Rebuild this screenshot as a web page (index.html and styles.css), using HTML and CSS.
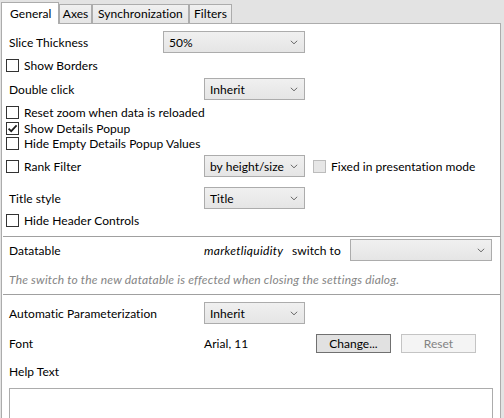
FILE: index.html
```html
<!DOCTYPE html>
<html>
<head>
<meta charset="utf-8">
<link rel="stylesheet" href="styles.css">
</head>
<body>
<div class="tabs">
  <div class="tab tab-general selected">General</div>
  <div class="tab tab-axes">Axes</div>
  <div class="tab tab-sync">Synchronization</div>
  <div class="tab tab-filters">Filters</div>
</div>
<div class="panel">
  <div class="row r-slice">
    <span class="label label-slice">Slice Thickness</span>
    <div class="combo combo-wide"><span>50%</span><svg class="arrow" width="8" height="5" viewBox="0 0 8 5"><path d="M0.8 0.8 L4 3.8 L7.2 0.8" fill="none" stroke="#6a6a6a" stroke-width="1"/></svg></div>
  </div>
  <div class="row crow r-borders">
    <span class="check"></span><span>Show Borders</span>
  </div>
  <div class="row r-dbl">
    <span class="label">Double click</span>
    <div class="combo"><span>Inherit</span><svg class="arrow" width="8" height="5" viewBox="0 0 8 5"><path d="M0.8 0.8 L4 3.8 L7.2 0.8" fill="none" stroke="#6a6a6a" stroke-width="1"/></svg></div>
  </div>
  <div class="row crow small r-reset">
    <span class="check"></span><span>Reset zoom when data is reloaded</span>
  </div>
  <div class="row crow small r-details">
    <span class="check"><svg width="11" height="11" viewBox="0 0 11 11"><path d="M1.6 5.6 L4.2 8.2 L9.6 2.4" fill="none" stroke="#1c1c1c" stroke-width="1.7"/></svg></span><span>Show Details Popup</span>
  </div>
  <div class="row crow small r-empty">
    <span class="check"></span><span>Hide Empty Details Popup Values</span>
  </div>
  <div class="row crow r-rank">
    <span class="check-label"><span class="check"></span><span>Rank Filter</span></span>
    <div class="combo"><span>by height/size</span><svg class="arrow" width="8" height="5" viewBox="0 0 8 5"><path d="M0.8 0.8 L4 3.8 L7.2 0.8" fill="none" stroke="#6a6a6a" stroke-width="1"/></svg></div>
    <span class="check disabled fixed-check"></span><span>Fixed in presentation mode</span>
  </div>
  <div class="row r-title">
    <span class="label">Title style</span>
    <div class="combo"><span>Title</span><svg class="arrow" width="8" height="5" viewBox="0 0 8 5"><path d="M0.8 0.8 L4 3.8 L7.2 0.8" fill="none" stroke="#6a6a6a" stroke-width="1"/></svg></div>
  </div>
  <div class="row crow small r-header">
    <span class="check"></span><span>Hide Header Controls</span>
  </div>
  <div class="separator sep-1"></div>
  <div class="row r-datatable">
    <span class="label">Datatable</span>
    <span class="table-name">marketliquidity</span>
    <span class="switch-to">switch to</span>
    <div class="combo combo-wide"><span></span><svg class="arrow" width="8" height="5" viewBox="0 0 8 5"><path d="M0.8 0.8 L4 3.8 L7.2 0.8" fill="none" stroke="#6a6a6a" stroke-width="1"/></svg></div>
  </div>
  <div class="row note">The switch to the new datatable is effected when closing the settings dialog.</div>
  <div class="separator sep-2"></div>
  <div class="row r-auto">
    <span class="label">Automatic Parameterization</span>
    <div class="combo"><span>Inherit</span><svg class="arrow" width="8" height="5" viewBox="0 0 8 5"><path d="M0.8 0.8 L4 3.8 L7.2 0.8" fill="none" stroke="#6a6a6a" stroke-width="1"/></svg></div>
  </div>
  <div class="row r-font">
    <span class="label">Font</span>
    <span class="font-value">Arial, 11</span>
    <button class="btn btn-change">Change...</button>
    <button class="btn btn-reset" disabled>Reset</button>
  </div>
  <div class="row r-help">Help Text</div>
  <div class="textbox"></div>
</div>
</body>
</html>
```
FILE: styles.css
```css
html, body {
  margin: 0;
  padding: 0;
}
body {
  width: 504px;
  height: 418px;
  overflow: hidden;
  background: #e3e3e3;
  font-family: Lato, "Noto Sans", "DejaVu Sans", sans-serif;
  font-size: 12px;
  letter-spacing: 0.05px;
  color: #000;
}
.tabs {
  display: flex;
  align-items: flex-end;
  height: 23px;
  padding-left: 1px;
  box-sizing: border-box;
}
.tab {
  box-sizing: border-box;
  height: 19px;
  border: 1px solid #acacac;
  border-bottom: none;
  background: linear-gradient(#f0f0f0, #e5e5e5);
  text-align: center;
  line-height: 18px;
  white-space: nowrap;
}
.tab.selected {
  position: relative;
  z-index: 2;
  height: 22px;
  margin-bottom: -1px;
  background: #fff;
  line-height: 21px;
  text-align: left;
  padding-left: 8px;
}
.tab-general { width: 58px; }
.tab-axes { width: 33px; }
.tab-sync { width: 97px; }
.tab-filters { width: 43px; }

.panel {
  position: relative;
  z-index: 1;
  margin-left: 1px;
  width: 500px;
  height: 395px;
  box-sizing: border-box;
  border: 1px solid #acacac;
  border-bottom: none;
  background: #fff;
  overflow: hidden;
}
.row {
  display: flex;
  align-items: center;
  height: 22px;
  padding-left: 7px;
  white-space: nowrap;
}
.crow { padding-left: 4px; height: 19px; }
.crow.small { height: 15px; }
.r-rank { height: 22px; }
.label { width: 195px; flex: none; }
.label-slice { width: 154px; }
.check-label {
  display: flex;
  align-items: center;
  width: 198px;
  flex: none;
}
.check {
  box-sizing: border-box;
  width: 13px;
  height: 13px;
  flex: none;
  border: 1px solid #333;
  background: #fff;
  margin-right: 5px;
  display: flex;
  align-items: center;
  justify-content: center;
}
.check.disabled {
  background: #e6e6e6;
  border-color: #bcbcbc;
}
.fixed-check { margin-left: 8px; }

.combo {
  box-sizing: border-box;
  width: 101px;
  height: 22px;
  flex: none;
  border: 1px solid #acacac;
  background: linear-gradient(#f0f0f0, #e5e5e5);
  display: flex;
  align-items: center;
  justify-content: space-between;
  padding: 0 6px 0 5px;
}
.combo-wide { width: 142px; }
.arrow { flex: none; }

.r-slice { margin-top: 7px; }
.r-borders { margin-top: 3px; }
.r-dbl { margin-top: 3px; }
.r-reset { margin-top: 5px; }
.r-details { margin-top: 1px; }
.r-empty { margin-top: 0; }
.r-rank { margin-top: 4px; }
.r-title { margin-top: 10px; }
.r-header { margin-top: 4px; }

.separator {
  height: 1px;
  background: #a0a0a0;
  margin-left: 1px;
}
.sep-1 { margin-top: 8px; }
.sep-2 { margin-top: 6px; }

.r-datatable { margin-top: 2px; }
.table-name {
  font-style: italic;
  letter-spacing: 0.3px;
  width: 88px;
  flex: none;
}
.switch-to {
  width: 58px;
  flex: none;
}
.note {
  margin-top: 9px;
  height: 18px;
  font-style: italic;
  letter-spacing: 0.18px;
  color: #858585;
}
.r-auto { margin-top: 7px; }
.r-font { margin-top: 10px; height: 19px; }
.font-value { width: 112px; flex: none; }
.btn {
  box-sizing: border-box;
  height: 19px;
  width: 75px;
  padding: 0;
  font-family: inherit;
  font-size: 12px;
  line-height: 16px;
}
.btn-change {
  background: #e1e1e1;
  border: 1px solid #707070;
  color: #000;
}
.btn-reset {
  margin-left: 10px;
  background: #f4f4f4;
  border: 1px solid #c4c4c4;
  color: #838383;
}
.r-help { margin-top: 10px; height: 16px; }
.textbox {
  box-sizing: border-box;
  margin: 9px 0 0 7px;
  width: 484px;
  height: 60px;
  border: 1px solid #acacac;
  background: #fff;
}
```
